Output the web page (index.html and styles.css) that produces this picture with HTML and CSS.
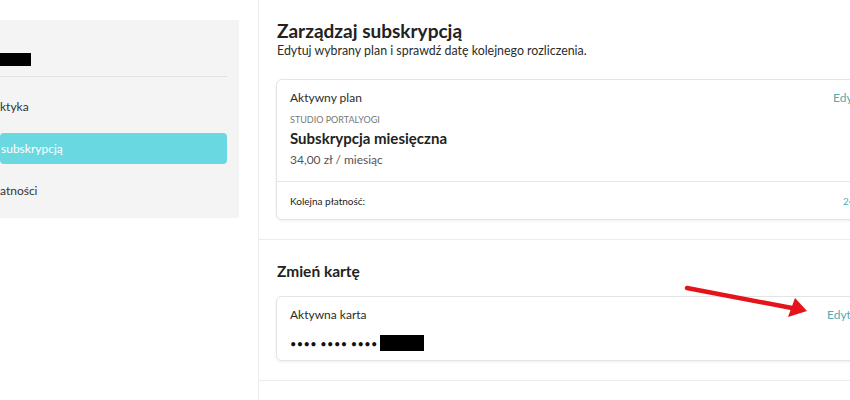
FILE: index.html
```html
<!DOCTYPE html>
<html lang="pl">
<head>
  <meta charset="UTF-8">
  <meta name="viewport" content="width=device-width, initial-scale=1.0">
  <title>Zarządzaj subskrypcją</title>
  <link rel="stylesheet" href="styles.css">
</head>
<body>
  <div class="page">
    <aside class="sidebar">
      <div class="panel">
        <div class="user">
          <span class="redact redact-name"></span>
        </div>
        <nav class="menu">
          <a class="menu-item" href="#">ktyka</a>
          <a class="menu-item active" href="#">subskrypcją</a>
          <a class="menu-item" href="#">atności</a>
        </nav>
      </div>
    </aside>

    <main class="content">
      <section class="section">
        <h1>Zarządzaj subskrypcją</h1>
        <p class="lead">Edytuj wybrany plan i sprawdź datę kolejnego rozliczenia.</p>

        <div class="card">
          <div class="card-body">
            <div class="row">
              <span class="label label-plan">Aktywny plan</span>
              <a class="link" href="#">Edytuj</a>
            </div>
            <div class="studio">STUDIO PORTALYOGI</div>
            <div class="plan-name">Subskrypcja miesięczna</div>
            <div class="price">34,00 zł / miesiąc</div>
          </div>
          <div class="card-foot row">
            <span class="next-label">Kolejna płatność:</span>
            <a class="link link-date" href="#">24.05.2021</a>
          </div>
        </div>
      </section>

      <section class="section">
        <h2>Zmień kartę</h2>
        <div class="card card-pay">
          <div class="row">
            <span class="label label-card">Aktywna karta</span>
            <a class="link" href="#">Edytuj</a>
          </div>
          <div class="card-number">
            <span class="dots">•••• •••• ••••</span>
            <span class="redact redact-card"></span>
          </div>
        </div>
      </section>

      <section class="section section-empty"></section>
    </main>

    <!-- annotation arrow -->
    <svg class="arrow" width="140" height="45" viewBox="0 0 140 45">
      <line x1="7" y1="8" x2="112" y2="28" stroke="#e5131a" stroke-width="4.5" stroke-linecap="round"/>
      <polygon points="115,18 108,37 127,31" fill="#e5131a"/>
    </svg>
  </div>
</body>
</html>
```

FILE: styles.css
```css
body {
  font-family: Lato, "Open Sans", sans-serif;
  margin: 0;
  padding: 0;
  background: #fff;
  color: #2b2b2b;
  overflow: hidden;
}
a {
  text-decoration: none;
}
.page {
  position: relative;
  display: flex;
  width: 850px;
  height: 400px;
  overflow: hidden;
}

/* sidebar */
.sidebar {
  flex: 0 0 258px;
}
.panel {
  width: 239px;
  height: 198px;
  margin-top: 20px;
  background: #f4f4f4;
  box-sizing: border-box;
}
.user {
  width: 227px;
  padding: 33px 0 10px;
  border-bottom: 1px solid #e2e2e2;
}
.redact {
  display: block;
  background: #000;
}
.redact-name {
  width: 31px;
  height: 13px;
}
.menu {
  display: flex;
  flex-direction: column;
  gap: 11px;
  width: 227px;
  margin-top: 14px;
}
.menu-item {
  height: 31px;
  line-height: 31px;
  font-size: 12px;
  color: #333;
  border-radius: 4px;
}
.menu-item.active {
  background: #6ad8e0;
  color: #fff;
  padding-left: 1px;
}

/* main */
.content {
  flex: 1;
  border-left: 1px solid #ececec;
}
.section {
  padding: 20px 0 19px 17px;
  border-bottom: 1px solid #ececec;
}
.section + .section {
  padding-top: 21px;
}
h1 {
  margin: 0 0 1px 1px;
  font-size: 19px;
  line-height: 22px;
  font-weight: 700;
  color: #222;
}
.lead {
  margin: 0 0 20px 1px;
  font-size: 12.4px;
  line-height: 16px;
  color: #2b2b2b;
}
h2 {
  margin: 0 0 15px 1px;
  font-size: 15.5px;
  line-height: 20px;
  font-weight: 700;
  color: #222;
}
.card {
  margin-right: -80px;
  background: #fff;
  border: 1px solid #e4e4e4;
  border-radius: 6px;
  box-shadow: 0 1px 3px rgba(0, 0, 0, 0.07);
}
.card-body {
  padding: 10px 0 13px 13px;
  border-bottom: 1px solid #e6e6e6;
}
.row {
  display: flex;
}
.label {
  font-size: 12px;
  line-height: 15px;
  color: #2b2b2b;
}
.label-plan {
  width: 543px;
}
.label-card {
  width: 537px;
}
.link {
  font-size: 12px;
  line-height: 15px;
  color: #55aab2;
}
.studio {
  margin-top: 9px;
  font-size: 9px;
  line-height: 12px;
  color: #777;
}
.plan-name {
  margin-top: 2px;
  font-size: 15px;
  line-height: 20px;
  font-weight: 700;
  color: #222;
}
.price {
  margin-top: 4px;
  font-size: 12px;
  line-height: 16px;
  color: #555;
}
.card-foot {
  margin-left: 12px;
  padding: 12px 0 11px 1px;
}
.next-label {
  width: 553px;
  font-size: 10px;
  line-height: 14px;
  color: #222;
}
.link-date {
  font-size: 10px;
  line-height: 14px;
}
.card-pay {
  padding: 10px 0 9px 13px;
}
.card-number {
  display: flex;
  align-items: center;
  margin-top: 13px;
  height: 16px;
}
.dots {
  font-size: 11px;
  letter-spacing: 0.4px;
  color: #111;
}
.redact-card {
  width: 44px;
  height: 16px;
  margin-left: 2px;
}
.section-empty {
  border-bottom: none;
}

.arrow {
  position: absolute;
  left: 680px;
  top: 280px;
}
```
